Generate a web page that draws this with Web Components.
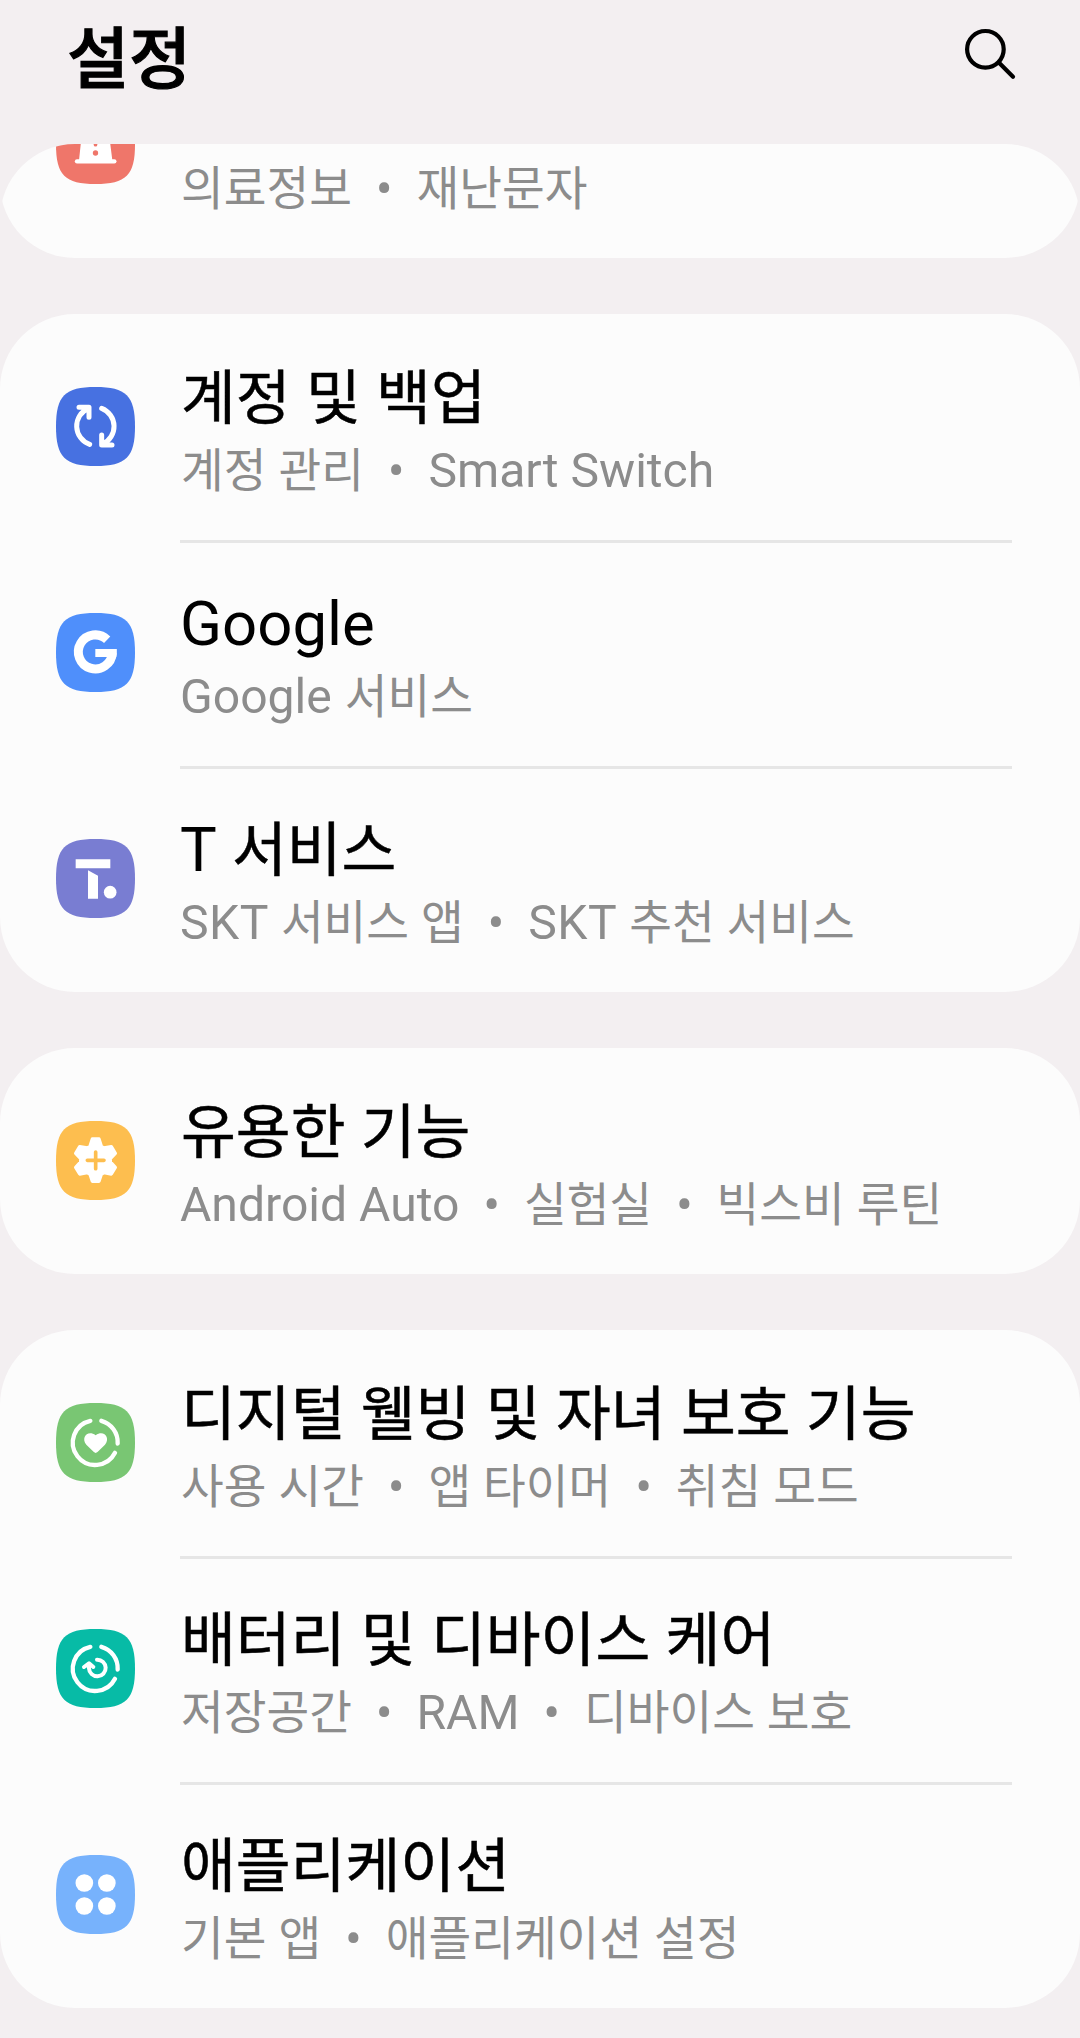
<!DOCTYPE html>
<html lang="ko">
<head>
<meta charset="utf-8">
<title>설정</title>
<style>
html,body{margin:0;height:2038px;overflow:hidden;background:#f3eff1;font-family:Roboto,"Noto Sans CJK KR",sans-serif}
</style>
</head>
<body>
<settings-page></settings-page>
<script>
const ring = cy => `<g fill="none" stroke="#fff" stroke-width="13" stroke-linecap="round"><path d="M151 ${cy-65}A67 67 0 1 0 225 ${cy+31}M184 ${cy-65}A67 67 0 0 1 233 ${cy+3}"/></g>`;
const ICONS = {
  emergency: ['#ef766a', 118.5, `<path fill="#fff" d="M123 110Q126 62 167 62Q208 62 210 110L217 166H117Z"/><path d="M111 169H223" stroke="#fff" stroke-width="13" stroke-linecap="round"/><circle cx="166.5" cy="144" r="8" fill="#ef766a"/><path d="M166.5 85V119" stroke="#ef766a" stroke-width="11" stroke-linecap="round"/>`],
  backup: ['#4771e1', 169.5, `<g fill="none" stroke="#fff" stroke-width="15" stroke-linecap="round" stroke-linejoin="round"><path d="M149 223A58 58 0 0 1 145 115M117 112H147V142M185 115A58 58 0 0 1 188 222M185 195V225H216"/></g>`],
  google: ['#4f8ffb', 157.5, `<path fill="none" stroke="#fff" stroke-width="27" d="M201.5 119A51 51 0 1 0 217 159"/><path fill="#fff" d="M166 147H230.500V159L229 171H166Z"/>`],
  tservice: ['#797dd2', 160.5, `<g fill="#fff"><path d="M107 103H211V130H107ZM144 136L174 152V221H144Z"/><circle cx="210.500" cy="201.500" r="19"/></g>`],
  advanced: ['#fdbe4f', 166.5, `<path fill="#fff" stroke="#fff" stroke-width="10" stroke-linejoin="round" d="M157 102H177L184 124L192 129L214 125L226 145L211 161V171L226 187L214 207L192 203L184 208L177 229H157L150 208L142 203L119 207L107 187L122 171V161L107 145L119 125L142 129L150 124Z"/><path d="M142 166H192M167 141V191" stroke="#fdbe4f" stroke-width="11" stroke-linecap="round"/>`],
  wellbeing: ['#79c673', 163.5, ring(163.5) + `<path fill="#fff" d="M167 195Q163 195 156 187L139 170C122 151 142 124 167 142C192 124 212 151 195 170L178 187Q171 195 167 195Z"/>`],
  care: ['#07bba6', 166.5, ring(166.5) + `<g fill="none" stroke="#fff" stroke-width="12" stroke-linecap="round" stroke-linejoin="round"><path d="M171 140A25 25 0 1 1 147 166V153M132 162L147 151L160 162"/></g>`],
  apps: ['#77b2fc', 163.5, `<g fill="#fff"><circle cx="133" cy="129" r="26.500"/><circle cx="200.500" cy="129" r="26.500"/><circle cx="133" cy="198" r="26.500"/><circle cx="200.500" cy="198" r="26.500"/></g>`]
};

class SettingIcon extends HTMLElement {
  connectedCallback() {
    const [color, cy, art] = ICONS[this.getAttribute('name')];
    this.attachShadow({mode: 'open'}).innerHTML = `
      <style>:host{display:block;width:79px;height:79px}svg{display:block;width:79px;height:79px}</style>
      <svg viewBox="48 ${cy - 118.5} 237 237"><path transform="translate(166.500 ${cy})" fill="${color}" d="M0-118.500C92-118.500 118.500-92 118.500 0S92 118.500 0 118.500S-118.500 92-118.500 0S-92-118.500 0-118.500Z"/>${art}</svg>`;
  }
}
customElements.define('setting-icon', SettingIcon);

/* Hangul is set a little smaller than the Latin letters beside it. */
const hangul = t => t.replace(/[\uac00-\ud7a3]+/g, m => `<span class="ko">${m}</span>`)
                     .replace('SKT', '<span class="caps">SKT</span>');

class SettingRow extends HTMLElement {
  connectedCallback() {
    const parts = this.getAttribute('sub').split('|').map(t => `<span class="t">${hangul(t)}</span>`).join('<span class="dot">•</span>');
    this.attachShadow({mode: 'open'}).innerHTML = `
      <style>
        :host{display:flex;height:226px;box-sizing:border-box;padding:0 68px 0 56px}
        setting-icon{margin-top:73px;flex:none}
        .body{flex:1;margin-left:45px;padding-top:44px;box-sizing:border-box;white-space:nowrap}
        :host([line]) .body{border-top:3px solid #e6e6e6;padding-top:41px}
        .title{font-size:61.7px;line-height:80px;height:80px;color:#000}
        .sub{display:flex;font-size:48.1px;line-height:66px;color:#8c8c8c}
        .t{white-space:pre}
        .ko{font-size:.966em;line-height:0}
        .title .ko{-webkit-text-stroke:.5px #000}
        .title .ko:first-child,.t:first-child .ko:first-child{margin-left:1px}
        .caps{letter-spacing:.5px}
        .dot{width:64.5px;text-align:center;font-size:50px}
      </style>
      <setting-icon name="${this.getAttribute('icon')}"></setting-icon>
      <div class="body"><div class="title">${hangul(this.getAttribute('label') || '')}</div><div class="sub">${parts}</div></div>`;
  }
}
customElements.define('setting-row', SettingRow);

class SettingCard extends HTMLElement {
  connectedCallback() {
    this.attachShadow({mode: 'open'}).innerHTML = `
      <style>:host{display:block;background:#fcfcfc;border-radius:75px;overflow:hidden;flex:none}</style><slot></slot>`;
  }
}
customElements.define('setting-card', SettingCard);

class SettingsHeader extends HTMLElement {
  connectedCallback() {
    this.attachShadow({mode: 'open'}).innerHTML = `
      <style>
        :host{display:flex;justify-content:space-between;height:144px;box-sizing:border-box;padding:0 60px 0 67px}
        h1{margin:4px 0 0;font:500 67.5px/100px "Noto Sans CJK KR",sans-serif;color:#000;-webkit-text-stroke:1.2px #000}
        svg{width:60px;height:60px;margin-top:24px}
      </style>
      <h1><slot></slot></h1>
      <svg viewBox="960 24 60 60" fill="none" stroke="#000" stroke-width="4.200" stroke-linecap="round"><circle cx="985.400" cy="49.300" r="18.300"/><path d="M998.800 62.500L1013 76.800"/></svg>`;
  }
}
customElements.define('settings-header', SettingsHeader);

class SettingsPage extends HTMLElement {
  connectedCallback() {
    this.attachShadow({mode: 'open'}).innerHTML = `
      <style>
        :host{display:flex;flex-direction:column;width:1080px;height:2038px;background:#f3eff1}
        .scroll{flex:1;min-height:0;overflow:hidden;border-radius:75px 75px 0 0;display:flex;flex-direction:column}
        .list{display:flex;flex-direction:column;gap:56px;margin-top:-112px}
      </style>
      <settings-header>설정</settings-header>
      <div class="scroll"><div class="list">
        <setting-card><setting-row icon="emergency" sub="의료정보|재난문자"></setting-row></setting-card>
        <setting-card>
          <setting-row icon="backup" sub="계정 관리|Smart Switch" label="계정 및 백업"></setting-row>
          <setting-row line icon="google" sub="Google 서비스" label="Google"></setting-row>
          <setting-row line icon="tservice" sub="SKT 서비스 앱|SKT 추천 서비스" label="T 서비스"></setting-row>
        </setting-card>
        <setting-card><setting-row icon="advanced" sub="Android Auto|실험실|빅스비 루틴" label="유용한 기능"></setting-row></setting-card>
        <setting-card>
          <setting-row icon="wellbeing" sub="사용 시간|앱 타이머|취침 모드" label="디지털 웰빙 및 자녀 보호 기능"></setting-row>
          <setting-row line icon="care" sub="저장공간|RAM|디바이스 보호" label="배터리 및 디바이스 케어"></setting-row>
          <setting-row line icon="apps" sub="기본 앱|애플리케이션 설정" label="애플리케이션"></setting-row>
        </setting-card>
      </div></div>`;
  }
}
customElements.define('settings-page', SettingsPage);
</script>
</body>
</html>
